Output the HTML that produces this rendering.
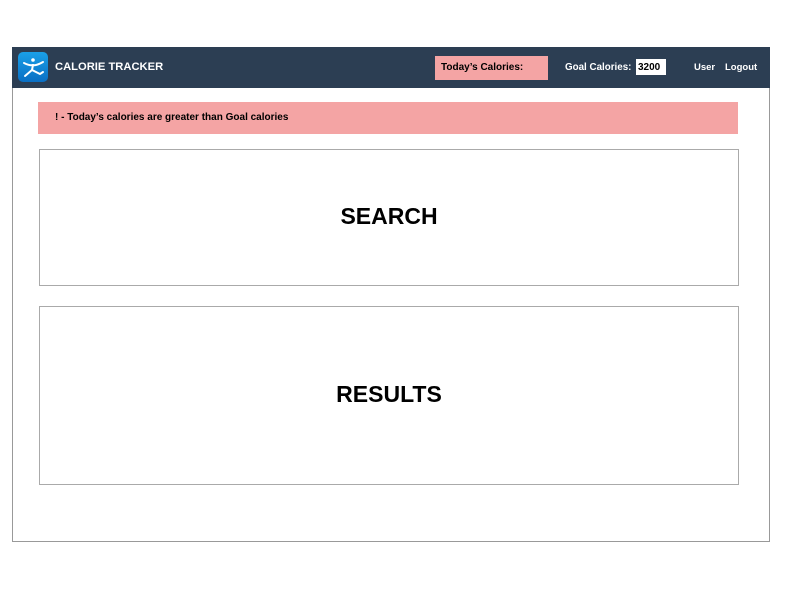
<!DOCTYPE html>
<html><head><style>
*{margin:0;padding:0;box-sizing:border-box}
body{width:792px;height:612px;background:#fff;font-family:"Liberation Sans",sans-serif;position:relative;overflow:hidden}
.frame{position:absolute;left:12px;top:47px;width:758px;height:495px;border:1px solid #999}
.nav{position:absolute;left:12px;top:47px;width:758px;height:41px;background:#2c3e53}
.abs{position:absolute}
.logo{left:18px;top:52px;width:30px;height:30px;border-radius:5px;background:linear-gradient(#1aa0e8,#0a6fc4)}
.t{color:#fff;font-weight:bold;font-size:10px}
.box{position:absolute;left:39px;width:700px;border:1px solid #aaa;display:flex;align-items:center;justify-content:center;font-weight:bold;font-size:23px}
</style></head><body>
<div class="frame"></div>
<div class="nav"></div>
<div class="abs logo"><svg width="30" height="30" viewBox="0 0 30 30"><g stroke="#fff" stroke-width="2" fill="none" stroke-linecap="round"><circle cx="15" cy="8" r="1.8" fill="#fff" stroke="none"/><path d="M6 11 Q12 14 15 13 Q18 14 25 10"/><path d="M15 13 L14 18 L7 24"/><path d="M14 18 L22 22 L25 20"/></g></svg></div>
<div class="abs t" style="left:55px;top:61px;font-size:11.2px">CALORIE TRACKER</div>
<div class="abs" style="left:435px;top:56px;width:113px;height:24px;background:#f4a4a4;font-size:10px;font-weight:bold;padding:6px 0 0 6px">Today’s Calories:</div>
<div class="abs t" style="left:565px;top:62px;font-size:9.8px">Goal Calories:</div>
<div class="abs" style="left:636px;top:59px;width:30px;height:16px;background:#fff;font-size:10px;font-weight:bold;padding:3px 0 0 2px">3200</div>
<div class="abs t" style="left:694px;top:62px;font-size:9.5px">User</div>
<div class="abs t" style="left:725px;top:62px;font-size:9.5px">Logout</div>
<div class="abs" style="left:38px;top:102px;width:700px;height:32px;background:#f4a4a4;font-size:10px;font-weight:bold;padding:10px 0 0 17px">! - Today’s calories are greater than Goal calories</div>
<div class="box" style="top:149px;height:137px;padding-bottom:2px">SEARCH</div>
<div class="box" style="top:306px;height:179px;padding-bottom:2px">RESULTS</div>
</body></html>
